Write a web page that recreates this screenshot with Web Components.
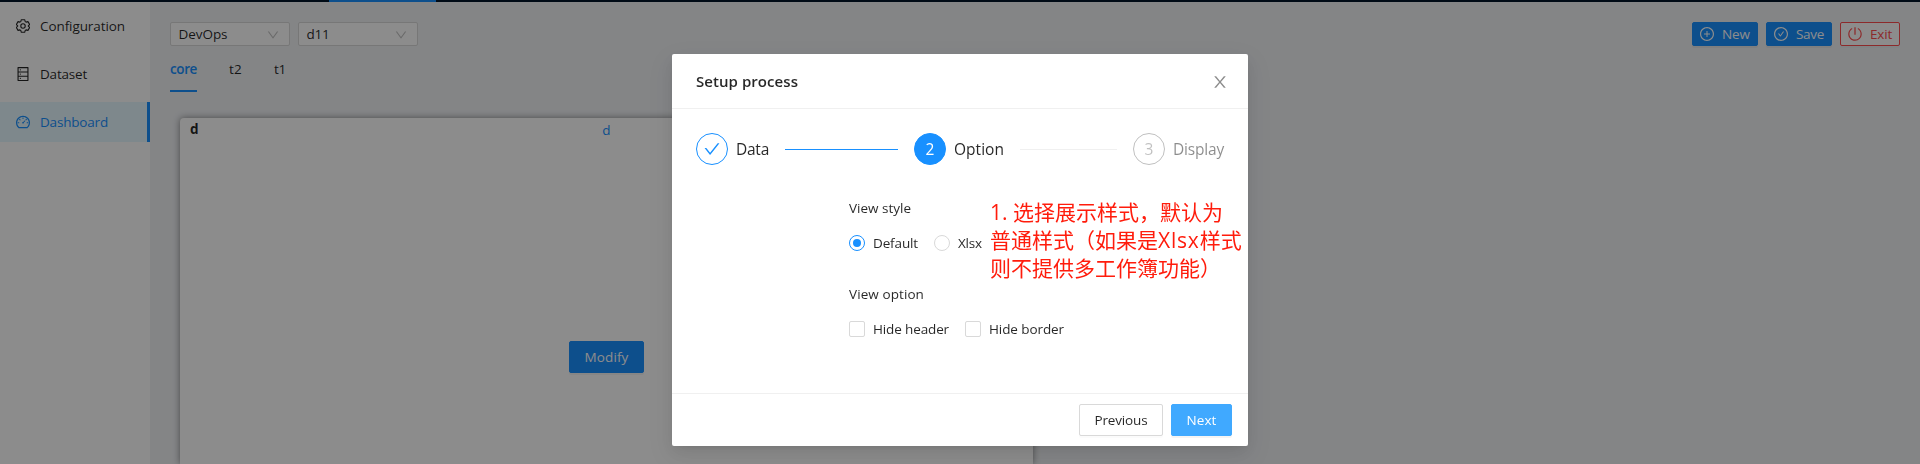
<!DOCTYPE html>
<html lang="en">
<head>
<meta charset="utf-8">
<title>Dashboard</title>
<style>
html, body { margin: 0; height: 100%; overflow: hidden; }
body { font: 13.5px/22px "Open Sans", "Noto Sans CJK SC", sans-serif; color: rgba(0,0,0,.85); }
</style>
</head>
<body>
<dash-app></dash-app>
<setup-dialog></setup-dialog>

<script>
const ICONS = {
  setting: '<g fill="none" stroke="currentColor" stroke-width="70" stroke-linejoin="round"><path d="M405 110H619L655 232L706 262L829 232L936 418L849 509V515L936 606L829 792L706 762L655 792L619 914H405L369 792L318 762L195 792L88 606L175 515V509L88 418L195 232L318 262L369 232Z"/><circle cx="512" cy="512" r="142"/></g>',
  database: '<path d="M832 64H192c-17.7 0-32 14.3-32 32v832c0 17.7 14.3 32 32 32h640c17.7 0 32-14.3 32-32V96c0-17.7-14.3-32-32-32zm-600 72h560v208H232V136zm560 480H232V408h560v208zm0 272H232V680h560v208zM304 240a40 40 0 1080 0 40 40 0 10-80 0zm0 272a40 40 0 1080 0 40 40 0 10-80 0zm0 272a40 40 0 1080 0 40 40 0 10-80 0z"/>',
  dashboard: '<path d="M924.8 385.6a446.7 446.7 0 00-96-142.4 446.7 446.7 0 00-142.4-96C631.1 123.8 572.5 112 512 112s-119.1 11.8-174.4 35.2a446.7 446.7 0 00-142.4 96 446.7 446.7 0 00-96 142.4C75.8 440.9 64 499.5 64 560c0 132.7 58.3 257.7 159.9 343.1l1.7 1.4c5.8 4.8 13.1 7.5 20.6 7.5h531.7c7.5 0 14.8-2.7 20.6-7.5l1.7-1.4C901.7 817.7 960 692.7 960 560c0-60.5-11.9-119.1-35.2-174.4zM761.4 836H262.6A371.12 371.12 0 01140 560c0-99.4 38.7-192.8 109-263 70.3-70.3 163.7-109 263-109 99.4 0 192.8 38.7 263 109 70.3 70.3 109 163.7 109 263 0 105.6-44.5 205.5-122.6 276zM623.5 421.5a8.03 8.03 0 00-11.3 0L527.7 506c-18.7-5-39.4-.2-54.1 14.5a55.95 55.95 0 000 79.2 55.95 55.95 0 0079.2 0 55.87 55.87 0 0014.5-54.1l84.5-84.5c3.1-3.1 3.1-8.2 0-11.3l-28.3-28.3zM490 320h44c4.4 0 8-3.6 8-8v-80c0-4.4-3.6-8-8-8h-44c-4.4 0-8 3.6-8 8v80c0 4.4 3.6 8 8 8zm260 218v44c0 4.4 3.6 8 8 8h80c4.4 0 8-3.6 8-8v-44c0-4.4-3.6-8-8-8h-80c-4.4 0-8 3.6-8 8zm12.7-197.2l-31.1-31.1a8.03 8.03 0 00-11.3 0l-56.6 56.6a8.03 8.03 0 000 11.3l31.1 31.1c3.1 3.1 8.2 3.1 11.3 0l56.6-56.6c3.1-3.1 3.1-8.2 0-11.3zm-458.6-31.1a8.03 8.03 0 00-11.3 0l-31.1 31.1a8.03 8.03 0 000 11.3l56.6 56.6c3.1 3.1 8.2 3.1 11.3 0l31.1-31.1c3.1-3.1 3.1-8.2 0-11.3l-56.6-56.6zM262 530h-80c-4.4 0-8 3.6-8 8v44c0 4.4 3.6 8 8 8h80c4.4 0 8-3.6 8-8v-44c0-4.4-3.6-8-8-8z"/>',
  plus: '<path d="M696 480H544V328c0-4.4-3.6-8-8-8h-48c-4.4 0-8 3.6-8 8v152H328c-4.4 0-8 3.6-8 8v48c0 4.4 3.6 8 8 8h152v152c0 4.4 3.6 8 8 8h48c4.4 0 8-3.6 8-8V544h152c4.4 0 8-3.6 8-8v-48c0-4.4-3.6-8-8-8z"/><path d="M512 64C264.6 64 64 264.6 64 512s200.6 448 448 448 448-200.6 448-448S759.4 64 512 64zm0 820c-205.4 0-372-166.6-372-372s166.6-372 372-372 372 166.6 372 372-166.6 372-372 372z"/>',
  save: '<path d="M699 353h-46.9c-10.2 0-19.9 4.9-25.9 13.3L469 584.3l-71.2-98.8c-6-8.3-15.6-13.3-25.9-13.3H325c-6.5 0-10.3 7.4-6.5 12.7l124.6 172.8a31.8 31.8 0 0051.7 0l210.6-292c3.9-5.3.1-12.7-6.4-12.7z"/><path d="M512 64C264.6 64 64 264.6 64 512s200.6 448 448 448 448-200.6 448-448S759.4 64 512 64zm0 820c-205.4 0-372-166.6-372-372s166.6-372 372-372 372 166.6 372 372-166.6 372-372 372z"/>',
  check: '<path d="M912 190h-69.9c-9.8 0-19.1 4.5-25.1 12.2L404.7 724.5 207 474a32 32 0 00-25.1-12.2H112c-6.7 0-10.4 7.7-6.3 12.9l273.9 347c12.8 16.2 37.4 16.2 50.3 0l488.4-618.9c4.1-5.1.4-12.8-6.3-12.8z"/>',
  close: '<path d="M563.8 512l262.5-312.9c4.4-5.2.7-13.1-6.1-13.1h-79.8c-4.7 0-9.2 2.1-12.3 5.7L511.6 449.8 295.1 191.7c-3-3.6-7.5-5.7-12.3-5.7H203c-6.8 0-10.5 7.9-6.1 13.1L459.4 512 196.9 824.9A7.95 7.95 0 00203 838h79.8c4.7 0 9.2-2.1 12.3-5.7l216.5-258.1 216.5 258.1c3 3.6 7.5 5.7 12.3 5.7h79.8c6.8 0 10.5-7.9 6.1-13.1L563.8 512z"/>',
  down: '<path d="M884 256h-75c-5.1 0-9.9 2.5-12.9 6.6L512 654.2 227.9 262.6c-3-4.1-7.8-6.6-12.9-6.6h-75c-6.5 0-10.3 7.4-6.5 12.7l352.6 486.1c12.8 17.6 39 17.6 51.7 0l352.6-486.1c3.9-5.3.1-12.7-6.4-12.7z"/>',
  power: '<path d="M705.6 124.9a8 8 0 00-11.6 7.2v64.2c0 5.5 2.9 10.6 7.5 13.6a352.2 352.2 0 0162.2 49.8c32.7 32.8 58.4 70.9 76.3 113.3a355 355 0 0127.9 138.7c0 48.1-9.4 94.8-27.9 138.7a355.92 355.92 0 01-76.3 113.3 353.06 353.06 0 01-113.2 76.4c-43.8 18.6-90.5 28-138.5 28s-94.7-9.4-138.5-28a353.06 353.06 0 01-113.2-76.4A355.92 355.92 0 01184 650.4a355 355 0 01-27.9-138.7c0-48.1 9.4-94.8 27.9-138.7 17.9-42.4 43.6-80.5 76.3-113.3 19-19 39.8-35.6 62.2-49.8 4.7-2.9 7.5-8.1 7.5-13.6V132c0-6-6.3-9.8-11.6-7.2C178.5 195.2 82 339.3 80 506.3 77.2 745.1 272.5 943.5 511.2 944c239 .5 432.8-193.3 432.8-432.4 0-169.2-97-315.7-238.4-386.7zM480 560h64c4.4 0 8-3.6 8-8V88c0-4.4-3.6-8-8-8h-64c-4.4 0-8 3.6-8 8v464c0 4.4 3.6 8 8 8z"/>'
};

function element(name, render) {
  customElements.define(name, class extends HTMLElement {
    connectedCallback() {
      if (this.shadowRoot) return;
      this.attachShadow({ mode: 'open' }).innerHTML = render(this);
    }
  });
}

element('ui-icon', el => `
<style>:host{display:block;flex:none;width:var(--size,14px);height:var(--size,14px)} svg{display:block;width:100%;height:100%}</style>
<svg viewBox="64 64 896 896" fill="currentColor">${ICONS[el.getAttribute('name')]}</svg>`);

element('menu-item', () => `
<style>
:host{display:flex;align-items:center;gap:10px;height:40px;margin-bottom:8px;padding-left:16px;box-sizing:border-box}
:host([active]){background:#e6f7ff;color:#1890ff;border-right:3px solid #1890ff}
</style><slot></slot>`);

element('ui-select', () => `
<style>
:host{display:flex;align-items:center;justify-content:space-between;box-sizing:border-box;width:120px;height:24px;padding:0 10px 0 7.5px;border:1px solid #d9d9d9;border-radius:2px;background:#fff}
ui-icon{--size:12px;color:rgba(0,0,0,.25);position:relative;top:1px}
</style><slot></slot><ui-icon name="down"></ui-icon>`);

element('ui-tab', () => `
<style>
:host{display:block;padding:12px 0 10px;height:22px;border-bottom:2px solid transparent}
:host([active]){color:#1890ff;border-color:#1890ff;font-weight:600}
</style><slot></slot>`);

element('ui-button', () => `
<style>
:host{display:flex;align-items:center;justify-content:center;gap:8px;box-sizing:border-box;height:32px;border:1px solid #d9d9d9;border-radius:2px;background:#fff;box-shadow:0 2px 0 rgba(0,0,0,.016)}
:host([small]){height:24px}
:host([primary]){background:#1890ff;border-color:#1890ff;color:#fff;box-shadow:0 2px 0 rgba(0,0,0,.045)}
:host([hover]){background:#40a9ff;border-color:#40a9ff}
:host([danger]){border-color:#ff4d4f;color:#ff4d4f}
</style><slot></slot>`);

element('ui-step', el => `
<style>
:host{display:flex;align-items:center;font-size:15.5px}
:host(:not([last])){flex:1;margin-right:16px}
:host([done]){flex:0 0 202px}
.dot{flex:none;display:flex;align-items:center;justify-content:center;box-sizing:border-box;width:32px;height:32px;margin-right:8px;border:1px solid #1890ff;border-radius:50%;color:#1890ff}
.line{flex:1;height:1px;margin-left:16px;background:#f0f0f0}
ui-icon{--size:16px}
:host([done]) .line{background:#1890ff}
:host([now]) .dot{background:#1890ff;color:#fff}
:host([last]){color:rgba(0,0,0,.45)}
:host([last]) .dot{border-color:rgba(0,0,0,.25);color:rgba(0,0,0,.25)}
</style>
<span class="dot">${el.hasAttribute('done') ? '<ui-icon name="check"></ui-icon>' : el.getAttribute('n')}</span><slot></slot>${el.hasAttribute('last') ? '' : '<span class="line"></span>'}`);

element('ui-choice', () => `
<style>
:host{display:flex;align-items:center;gap:8px;height:22px}
i{display:flex;align-items:center;justify-content:center;box-sizing:border-box;width:16px;height:16px;border:1px solid #d9d9d9;border-radius:2px;background:#fff}
:host([radio]) i{border-radius:50%}
:host([checked]) i{border-color:#1890ff}
:host([checked]) i::after{content:"";width:8px;height:8px;border-radius:50%;background:#1890ff}
</style><i></i><slot></slot>`);

element('dash-app', () => `
<style>
:host{display:flex;flex-direction:column;height:100%;background:#f0f2f5}
.top{flex:none;height:2px;background:#001529;display:flex;padding-left:329px}
.top i{width:107px;background:#1890ff}
.body{flex:1;display:flex;min-height:0}
nav{flex:none;width:150px;box-sizing:border-box;padding-top:4px;background:#fff}
main{flex:1;display:flex;flex-direction:column;padding:20px 20px 0;min-width:0}
.bar{display:flex;gap:8px}
.bar ui-button:first-of-type{margin-left:auto}
.tabs{display:flex;height:46px;gap:32px}
.card{flex:1;min-height:0;width:853px;margin:26px 0 0 10px;border-radius:4px 4px 0 0;background:#fff;box-shadow:0 0 7px rgba(0,0,0,.45);display:flex;flex-direction:column}
.head{display:grid;grid-template-columns:1fr auto 1fr;padding:0 10px;height:24px}
.head b{font-weight:700}
.head span{color:#1890ff;padding-top:1px}
.mod{width:75px;margin:199px auto 0}
</style>
<div class="top"><i></i></div>
<div class="body">
<nav>
<menu-item><ui-icon name="setting"></ui-icon><fit-text w="85">Configuration</fit-text></menu-item>
<menu-item><ui-icon name="database"></ui-icon><fit-text w="47">Dataset</fit-text></menu-item>
<menu-item active><ui-icon name="dashboard"></ui-icon><fit-text w="68">Dashboard</fit-text></menu-item>
</nav>
<main>
<div class="bar">
<ui-select><fit-text w="49">DevOps</fit-text></ui-select>
<ui-select><fit-text w="23">d11</fit-text></ui-select>
<ui-button small primary style="width:66px"><ui-icon name="plus"></ui-icon><fit-text w="28">New</fit-text></ui-button>
<ui-button small primary style="width:66px"><ui-icon name="save"></ui-icon><fit-text w="28">Save</fit-text></ui-button>
<ui-button small danger style="width:60px"><ui-icon name="power"></ui-icon><fit-text w="22">Exit</fit-text></ui-button>
</div>
<div class="tabs">
<ui-tab active><fit-text w="27">core</fit-text></ui-tab>
<ui-tab><fit-text w="13">t2</fit-text></ui-tab>
<ui-tab><fit-text w="12">t1</fit-text></ui-tab>
</div>
<section class="card">
<div class="head"><b>d</b><span>d</span></div>
<ui-button class="mod" primary><fit-text w="44">Modify</fit-text></ui-button>
</section>
</main>
</div>`);

element('setup-dialog', () => `
<style>
:host{position:fixed;inset:0;background:rgba(0,0,0,.45)}
.box{display:flex;flex-direction:column;width:576px;height:392px;margin:54px auto 0;border-radius:2px;background:#fff;box-shadow:0 3px 6px -4px rgba(0,0,0,.12),0 6px 16px 0 rgba(0,0,0,.08),0 9px 28px 8px rgba(0,0,0,.05)}
header{display:flex;align-items:center;justify-content:space-between;flex:none;height:54px;padding:0 20px 0 24px;border-bottom:1px solid #f0f0f0;font-size:15px;font-weight:600}
header ui-icon{--size:16px;color:rgba(0,0,0,.45);padding-top:1px}
.steps{display:flex;height:32px;padding:24px 24px 0}
.form{flex:1;display:grid;grid-template-columns:134px 1fr;padding:0 24px 0 43px;align-items:start}
.fields{grid-column:2;padding-top:32px}
.row{display:flex;gap:16px;margin:13px 0 29px}
.note{position:absolute;left:990px;top:198px;margin:0;font:21px/28px "Open Sans","Noto Sans CJK SC",sans-serif;color:#ff1c0c;white-space:nowrap}
.note span{display:block}
.note em{font-style:normal;letter-spacing:.8px}
footer{display:flex;justify-content:flex-end;gap:8px;flex:none;height:42px;padding:10px 16px 0;border-top:1px solid #f0f0f0}
</style>
<div class="box">
<header><fit-text w="102">Setup process</fit-text><ui-icon name="close"></ui-icon></header>
<div class="steps">
<ui-step done><fit-text w="33">Data</fit-text></ui-step>
<ui-step now n="2"><fit-text w="50">Option</fit-text></ui-step>
<ui-step last n="3"><fit-text w="51">Display</fit-text></ui-step>
</div>
<div class="form"><div class="fields">
<fit-text w="62">View style</fit-text>
<div class="row"><ui-choice radio checked><fit-text w="45">Default</fit-text></ui-choice><ui-choice radio><fit-text w="24">Xlsx</fit-text></ui-choice></div>
<fit-text w="75">View option</fit-text>
<div class="row"><ui-choice><fit-text w="76">Hide header</fit-text></ui-choice><ui-choice><fit-text w="75">Hide border</fit-text></ui-choice></div>
</div></div>
<footer>
<ui-button style="width:84px"><fit-text w="53">Previous</fit-text></ui-button>
<ui-button primary hover style="width:61px"><fit-text w="30">Next</fit-text></ui-button>
</footer>
</div>
<p class="note"><span>1. 选择展示样式，默认为</span><span>普通样式（如果是<em>Xlsx</em>样式</span><span>则不提供多工作簿功能）</span></p>`);

/* A label tracked so that its text fills a given width. */
customElements.define('fit-text', class extends HTMLElement {
  connectedCallback() {
    if (this.shadowRoot) return;
    this.attachShadow({ mode: 'open' }).innerHTML =
      '<style>:host{display:block;flex:none;white-space:nowrap;width:fit-content}span{display:inline-block}</style><span><slot></slot></span>';
    const w = +this.getAttribute('w');
    const span = this.shadowRoot.querySelector('span');
    const spacing = (w - span.getBoundingClientRect().width) / this.textContent.length;
    span.style.letterSpacing = spacing.toFixed(3) + 'px';
    this.style.width = w + 'px';
  }
});
</script>
</body>
</html>
